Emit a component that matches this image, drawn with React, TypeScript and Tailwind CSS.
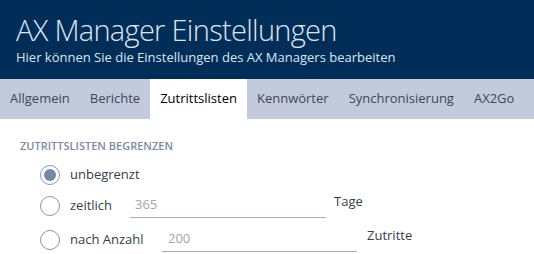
import React from "react";

const tabs = ["Allgemein", "Berichte", "Zutrittslisten", "Kennwörter", "Synchronisierung", "AX2Go"];

function Radio({ checked }: { checked?: boolean }) {
  return (
    <div className="w-[20px] h-[20px] rounded-full border border-[#8796b3] bg-white flex items-center justify-center shrink-0">
      {checked && <div className="w-[12px] h-[12px] rounded-full bg-[#7487a9]" />}
    </div>
  );
}

export default function App() {
  return (
    <div
      className="w-[534px] h-[254px] bg-white overflow-hidden"
      style={{ fontFamily: '"Open Sans", "Noto Sans", sans-serif' }}
    >
      <div className="h-[79px] bg-[#012e58] px-[16px] pt-[11px]">
        <div className="text-[29px] leading-[38px] font-light text-[#dde5f0] tracking-[-0.7px]">AX Manager Einstellungen</div>
        <div className="text-[13px] leading-[18px] text-[#dde5f0] mt-[-1px]">Hier können Sie die Einstellungen des AX Managers bearbeiten</div>
      </div>
      <div className="h-[40px] bg-[#c2cadb] flex">
        {tabs.map((t) => (
          <div
            key={t}
            className={
              "h-full px-[10px] flex items-center text-[13px] " +
              (t === "Zutrittslisten" ? "bg-white text-black" : "text-[#3e4757]")
            }
          >
            {t}
          </div>
        ))}
      </div>
      <div className="pl-[20px] pt-[20px]">
        <div className="text-[11px] leading-[14px] font-semibold text-[#7d8ba6] uppercase">Zutrittslisten begrenzen</div>
        <div className="pl-[20px] mt-[6px] flex flex-col text-[13px] text-[#363e4a]">
          <div className="h-[31px] flex items-center gap-[10px]">
            <Radio checked />
            <span>unbegrenzt</span>
          </div>
          <div className="h-[31px] flex items-center">
            <Radio />
            <span className="ml-[10px] w-[60px]">zeitlich</span>
            <div className="flex items-start">
              <div className="w-[196px] h-[24px] border-b border-[#a3aec3] pl-[5px] flex items-center text-[#a5a5a5]">365</div>
              <span className="ml-[8px] leading-[18px] mt-[-2px]">Tage</span>
            </div>
          </div>
          <div className="h-[31px] mt-[3px] flex items-center">
            <Radio />
            <span className="ml-[10px] w-[92px]">nach Anzahl</span>
            <div className="flex items-start">
              <div className="w-[195px] h-[24px] border-b border-[#a3aec3] pl-[6px] flex items-center text-[#a5a5a5]">200</div>
              <span className="ml-[10px] leading-[18px] mt-[-2px]">Zutritte</span>
            </div>
          </div>
        </div>
      </div>
    </div>
  );
}
